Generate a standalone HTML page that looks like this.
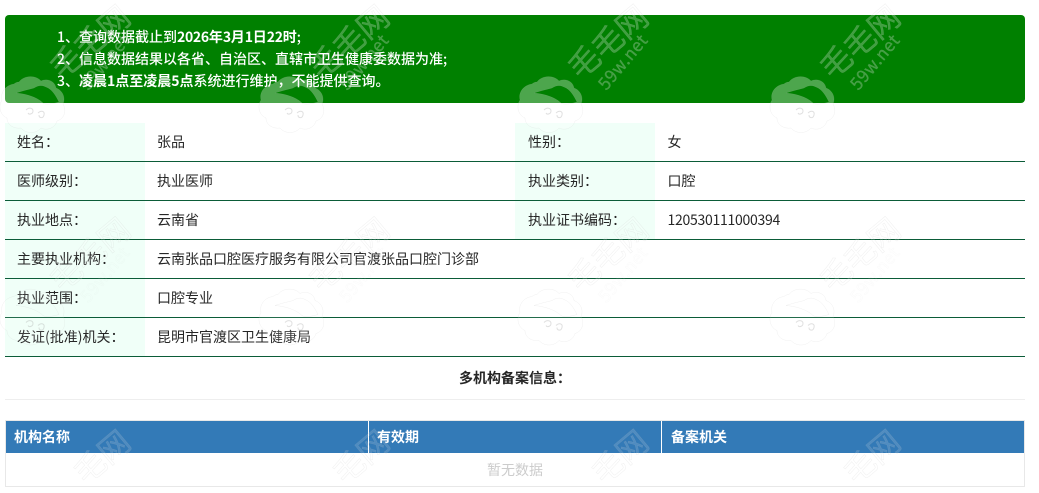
<!DOCTYPE html>
<html lang="zh-CN">
<head>
<meta charset="utf-8">
<style>
*{box-sizing:border-box}
html,body{margin:0;padding:0;width:1039px;height:493px;overflow:hidden;background:#fff}
body{position:relative;font-family:"Noto Sans CJK SC","Liberation Sans",sans-serif;font-size:14px;color:#262626}
.a{position:absolute;white-space:nowrap}
.notice{left:5px;top:15px;width:1020px;height:88px;background:#008000;border-radius:4px}
.n{left:57px;color:#fff;line-height:22px;height:22px;font-weight:500}
.n b{font-weight:700}
.n i{font-style:normal;letter-spacing:-.3px}
.lab{background:#f0fff8;width:140px;height:38px}
.hl{left:5px;width:1020px;height:1px;background:#0b5c38}
.t{line-height:20px;height:20px}
.clip{position:absolute;left:0;top:0;width:1039px;height:493px;overflow:hidden;pointer-events:none}
.wm{position:absolute;left:0;top:0}
.wm .c{fill-rule:evenodd}
.wm .s{fill:none;stroke:#999;stroke-opacity:.3;stroke-width:1}
.wm .h{font-size:31px;text-anchor:middle;fill-opacity:.25}
.wm .u{font-size:17px;letter-spacing:.5px;text-anchor:middle;fill-opacity:.25}
.wm .low .c{fill-opacity:.1}
.wm .low .h{fill-opacity:.14}
.wm .low .u{fill-opacity:.05;stroke-opacity:.08}
</style>
</head>
<body>
<div class="a notice"></div>
<div class="a n" style="top:26px">1、查询数据截止到<b><i>2026</i>年<i>3</i>月<i>1</i>日<i>22</i>时</b>;</div>
<div class="a n" style="top:48px">2、信息数据结果以各省、自治区、直辖市卫生健康委数据为准;</div>
<div class="a n" style="top:70px">3、<b>凌晨1点至凌晨5点</b>系统进行维护，不能提供查询。</div>

<div class="a lab" style="left:5px;top:123px"></div>
<div class="a lab" style="left:515px;top:123px"></div>
<div class="a lab" style="left:5px;top:162px"></div>
<div class="a lab" style="left:515px;top:162px"></div>
<div class="a lab" style="left:5px;top:201px"></div>
<div class="a lab" style="left:515px;top:201px"></div>
<div class="a lab" style="left:5px;top:240px"></div>
<div class="a lab" style="left:5px;top:279px"></div>
<div class="a lab" style="left:5px;top:318px"></div>

<div class="a hl" style="top:161px"></div>
<div class="a hl" style="top:200px"></div>
<div class="a hl" style="top:239px"></div>
<div class="a hl" style="top:278px"></div>
<div class="a hl" style="top:317px"></div>
<div class="a hl" style="top:356px"></div>

<div class="a t" style="left:17px;top:132px">姓名：</div>
<div class="a t" style="left:157px;top:132px">张品</div>
<div class="a t" style="left:528px;top:132px">性别：</div>
<div class="a t" style="left:667.5px;top:132px">女</div>

<div class="a t" style="left:17px;top:171px">医师级别：</div>
<div class="a t" style="left:157px;top:171px">执业医师</div>
<div class="a t" style="left:528px;top:171px">执业类别：</div>
<div class="a t" style="left:667.5px;top:171px">口腔</div>

<div class="a t" style="left:17px;top:210px">执业地点：</div>
<div class="a t" style="left:157px;top:210px">云南省</div>
<div class="a t" style="left:528px;top:210px">执业证书编码：</div>
<div class="a t" style="left:667.5px;top:210px;letter-spacing:-.27px">120530111000394</div>

<div class="a t" style="left:17px;top:249px">主要执业机构：</div>
<div class="a t" style="left:157px;top:249px">云南张品口腔医疗服务有限公司官渡张品口腔门诊部</div>

<div class="a t" style="left:17px;top:288px">执业范围：</div>
<div class="a t" style="left:157px;top:288px">口腔专业</div>

<div class="a t" style="left:17px;top:327px">发证(批准)机关：</div>
<div class="a t" style="left:157px;top:327px">昆明市官渡区卫生健康局</div>

<div class="a t" style="left:5px;width:1020px;top:368px;text-align:center;font-weight:700">多机构备案信息：</div>
<div class="a" style="left:5px;top:399px;width:1020px;height:1px;background:#eee"></div>

<div class="a" style="left:5px;top:420px;width:1020px;height:67px;border:1px solid #e8e8e8"></div>
<div class="a" style="left:6px;top:421px;width:1018px;height:32px;background:#337ab7"></div>
<div class="a" style="left:368px;top:421px;width:1px;height:32px;background:#fff"></div>
<div class="a" style="left:661px;top:421px;width:1px;height:32px;background:#fff"></div>
<div class="a t" style="left:14px;top:427px;color:#fff;font-weight:700">机构名称</div>
<div class="a t" style="left:377px;top:427px;color:#fff;font-weight:700">有效期</div>
<div class="a t" style="left:671px;top:427px;color:#fff;font-weight:700">备案机关</div>
<div class="a t" style="left:5px;width:1020px;top:460px;text-align:center;color:#ccc">暂无数据</div>

<div class="clip">
<svg class="wm" width="1039" height="493" viewBox="0 0 1039 493" xmlns="http://www.w3.org/2000/svg" font-family="'Noto Sans CJK SC','Liberation Sans',sans-serif">
<g fill="#fff" fill-opacity=".3" stroke="#bbb" stroke-opacity=".22" stroke-width=".5">
<g transform="translate(38,102)"><path class="c" d="M-19-20c5-7 17-7 22-1 6-3 14 0 15 7 6 2 10 9 7 16 4 7 1 15-6 17-2 7-10 10-16 7-5 6-15 6-20 0-7 1-14-3-14-10-7-3-9-12-5-18-2-8 4-15 12-16 1-1 3-2 5-2zM-22-9c9-3 15-4 18-5 6-4 10-2 12-1 6 2 10 9 13 15-7 2-13 3-16 1-5-5-15-9-27-10z"/><path class="s" d="M-12 8c3-3 7-2 7 1s-4 4-5 2M0 11c3-3 7-2 6 2s-5 3-5 0"/><text class="h" transform="translate(52,-60) rotate(-40)" y="11">毛毛网</text><text class="u" transform="translate(67,-40) rotate(-50)" y="6">59w.net</text></g>
<g transform="translate(297,102)"><path class="c" d="M-19-20c5-7 17-7 22-1 6-3 14 0 15 7 6 2 10 9 7 16 4 7 1 15-6 17-2 7-10 10-16 7-5 6-15 6-20 0-7 1-14-3-14-10-7-3-9-12-5-18-2-8 4-15 12-16 1-1 3-2 5-2zM-22-9c9-3 15-4 18-5 6-4 10-2 12-1 6 2 10 9 13 15-7 2-13 3-16 1-5-5-15-9-27-10z"/><path class="s" d="M-12 8c3-3 7-2 7 1s-4 4-5 2M0 11c3-3 7-2 6 2s-5 3-5 0"/><text class="h" transform="translate(52,-60) rotate(-40)" y="11">毛毛网</text><text class="u" transform="translate(67,-40) rotate(-50)" y="6">59w.net</text></g>
<g transform="translate(556,102)"><path class="c" d="M-19-20c5-7 17-7 22-1 6-3 14 0 15 7 6 2 10 9 7 16 4 7 1 15-6 17-2 7-10 10-16 7-5 6-15 6-20 0-7 1-14-3-14-10-7-3-9-12-5-18-2-8 4-15 12-16 1-1 3-2 5-2zM-22-9c9-3 15-4 18-5 6-4 10-2 12-1 6 2 10 9 13 15-7 2-13 3-16 1-5-5-15-9-27-10z"/><path class="s" d="M-12 8c3-3 7-2 7 1s-4 4-5 2M0 11c3-3 7-2 6 2s-5 3-5 0"/><text class="h" transform="translate(52,-60) rotate(-40)" y="11">毛毛网</text><text class="u" transform="translate(67,-40) rotate(-50)" y="6">59w.net</text></g>
<g transform="translate(808,102)"><path class="c" d="M-19-20c5-7 17-7 22-1 6-3 14 0 15 7 6 2 10 9 7 16 4 7 1 15-6 17-2 7-10 10-16 7-5 6-15 6-20 0-7 1-14-3-14-10-7-3-9-12-5-18-2-8 4-15 12-16 1-1 3-2 5-2zM-22-9c9-3 15-4 18-5 6-4 10-2 12-1 6 2 10 9 13 15-7 2-13 3-16 1-5-5-15-9-27-10z"/><path class="s" d="M-12 8c3-3 7-2 7 1s-4 4-5 2M0 11c3-3 7-2 6 2s-5 3-5 0"/><text class="h" transform="translate(52,-60) rotate(-40)" y="11">毛毛网</text><text class="u" transform="translate(67,-40) rotate(-50)" y="6">59w.net</text></g>

<g class="low" transform="translate(38,314.5)"><path class="c" d="M-19-20c5-7 17-7 22-1 6-3 14 0 15 7 6 2 10 9 7 16 4 7 1 15-6 17-2 7-10 10-16 7-5 6-15 6-20 0-7 1-14-3-14-10-7-3-9-12-5-18-2-8 4-15 12-16 1-1 3-2 5-2zM-22-9c9-3 15-4 18-5 6-4 10-2 12-1 6 2 10 9 13 15-7 2-13 3-16 1-5-5-15-9-27-10z"/><path class="s" d="M-12 8c3-3 7-2 7 1s-4 4-5 2M0 11c3-3 7-2 6 2s-5 3-5 0"/><text class="h" transform="translate(52,-60) rotate(-40)" y="11">毛毛网</text><text class="u" transform="translate(67,-40) rotate(-50)" y="6">59w.net</text></g>
<g class="low" transform="translate(297,314.5)"><path class="c" d="M-19-20c5-7 17-7 22-1 6-3 14 0 15 7 6 2 10 9 7 16 4 7 1 15-6 17-2 7-10 10-16 7-5 6-15 6-20 0-7 1-14-3-14-10-7-3-9-12-5-18-2-8 4-15 12-16 1-1 3-2 5-2zM-22-9c9-3 15-4 18-5 6-4 10-2 12-1 6 2 10 9 13 15-7 2-13 3-16 1-5-5-15-9-27-10z"/><path class="s" d="M-12 8c3-3 7-2 7 1s-4 4-5 2M0 11c3-3 7-2 6 2s-5 3-5 0"/><text class="h" transform="translate(52,-60) rotate(-40)" y="11">毛毛网</text><text class="u" transform="translate(67,-40) rotate(-50)" y="6">59w.net</text></g>
<g class="low" transform="translate(556,314.5)"><path class="c" d="M-19-20c5-7 17-7 22-1 6-3 14 0 15 7 6 2 10 9 7 16 4 7 1 15-6 17-2 7-10 10-16 7-5 6-15 6-20 0-7 1-14-3-14-10-7-3-9-12-5-18-2-8 4-15 12-16 1-1 3-2 5-2zM-22-9c9-3 15-4 18-5 6-4 10-2 12-1 6 2 10 9 13 15-7 2-13 3-16 1-5-5-15-9-27-10z"/><path class="s" d="M-12 8c3-3 7-2 7 1s-4 4-5 2M0 11c3-3 7-2 6 2s-5 3-5 0"/><text class="h" transform="translate(52,-60) rotate(-40)" y="11">毛毛网</text><text class="u" transform="translate(67,-40) rotate(-50)" y="6">59w.net</text></g>
<g class="low" transform="translate(808,314.5)"><path class="c" d="M-19-20c5-7 17-7 22-1 6-3 14 0 15 7 6 2 10 9 7 16 4 7 1 15-6 17-2 7-10 10-16 7-5 6-15 6-20 0-7 1-14-3-14-10-7-3-9-12-5-18-2-8 4-15 12-16 1-1 3-2 5-2zM-22-9c9-3 15-4 18-5 6-4 10-2 12-1 6 2 10 9 13 15-7 2-13 3-16 1-5-5-15-9-27-10z"/><path class="s" d="M-12 8c3-3 7-2 7 1s-4 4-5 2M0 11c3-3 7-2 6 2s-5 3-5 0"/><text class="h" transform="translate(52,-60) rotate(-40)" y="11">毛毛网</text><text class="u" transform="translate(67,-40) rotate(-50)" y="6">59w.net</text></g>

<g class="low" transform="translate(38,527)"><text class="h" transform="translate(64,-70) rotate(-40)" y="11">毛网</text></g>
<g class="low" transform="translate(297,527)"><text class="h" transform="translate(64,-70) rotate(-40)" y="11">毛网</text></g>
<g class="low" transform="translate(556,527)"><text class="h" transform="translate(64,-70) rotate(-40)" y="11">毛网</text></g>
<g class="low" transform="translate(808,527)"><text class="h" transform="translate(64,-70) rotate(-40)" y="11">毛网</text></g>
</g>
</svg>
</div>
</body>
</html>
